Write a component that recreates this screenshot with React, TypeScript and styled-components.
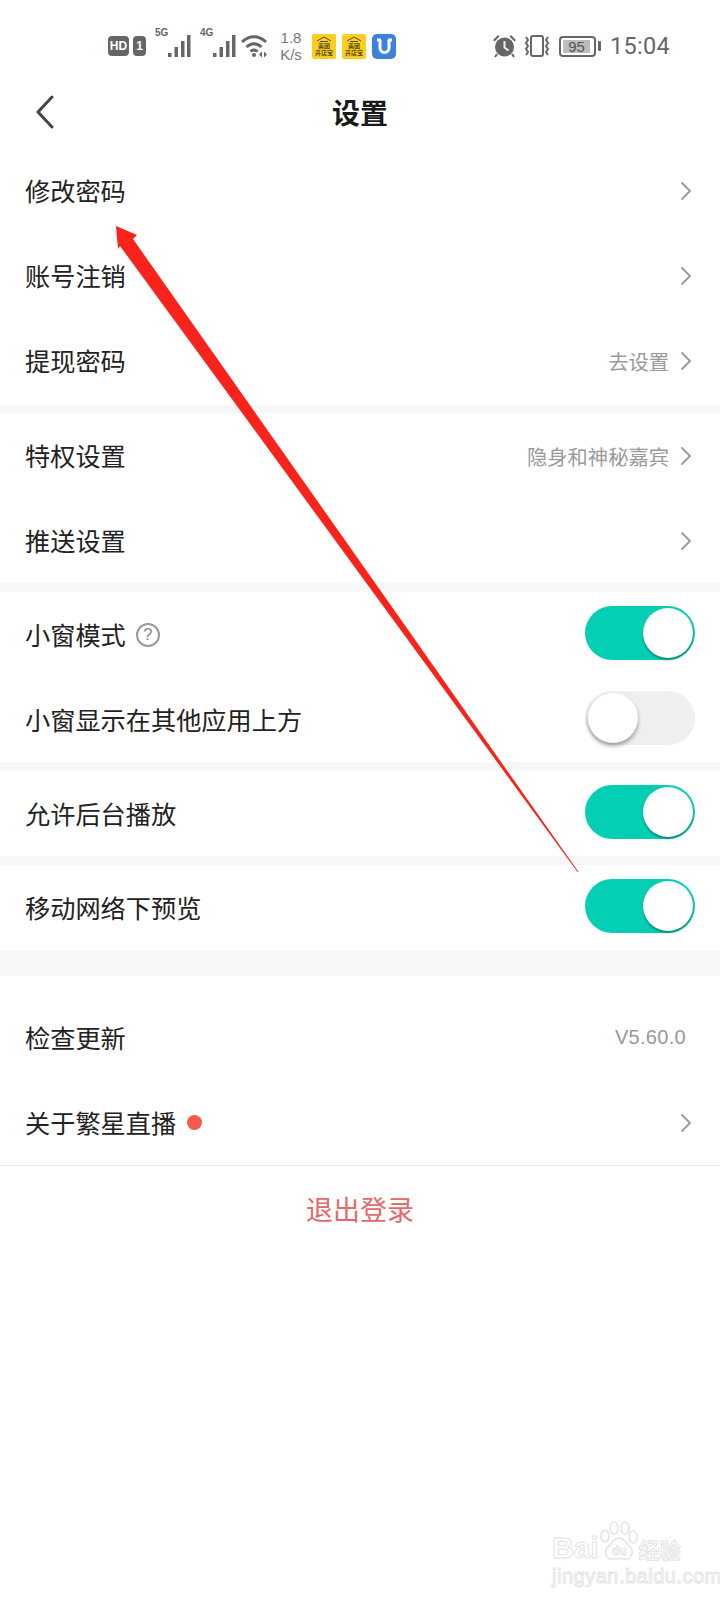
import React from 'react';
import styled, { createGlobalStyle } from 'styled-components';

const GlobalStyle = createGlobalStyle`
  html, body {
    margin: 0;
    padding: 0;
    background: #fff;
  }
  * {
    box-sizing: border-box;
  }
`;

const Screen = styled.div`
  position: relative;
  width: 720px;
  height: 1600px;
  overflow: hidden;
  background: #fff;
  font-family: "Noto Sans CJK SC", "Noto Sans", sans-serif;
  color: #1c1c1c;
`;

const StatusBar = styled.div`
  height: 76px;
  padding: 16px 50px 0 108px;
  display: flex;
  align-items: center;
  color: #666;
`;

const StatusGroup = styled.div`
  display: flex;
  align-items: center;
`;

const RightGroup = styled(StatusGroup)`
  margin-left: auto;
`;

const HdBadge = styled.span`
  width: 21px;
  height: 20px;
  border-radius: 4px;
  background: #666;
  color: #fff;
  font: 700 12px/20px "Liberation Sans", sans-serif;
  text-align: center;
`;

const SimBadge = styled(HdBadge)`
  width: 13px;
  margin-left: 4px;
`;

const NetLabel = styled.span<{ $gap: number }>`
  align-self: flex-start;
  margin: -2px 0 0 ${({ $gap }) => $gap}px;
  width: 13px;
  font: 700 10px/12px "Liberation Sans", sans-serif;
  color: #666;
`;

const WifiGap = styled.span`
  width: 4px;
`;

const Speed = styled.span`
  width: 26px;
  margin: 0 8px 0 9px;
  font: 400 15px/17px "Liberation Sans", sans-serif;
  text-align: center;
  color: #777;
`;

const AppIcon = styled.span`
  width: 24px;
  height: 25px;
  margin-right: 6px;
  padding-top: 2px;
  border-radius: 2px;
  background: #fbcf1f;
  color: #5d4a10;
  font: 700 6px/7px "Noto Sans CJK SC", sans-serif;
  text-align: center;
  display: flex;
  flex-direction: column;
  align-items: center;
`;

const BlueIcon = styled.span`
  width: 24px;
  height: 25px;
  border-radius: 5px;
  background: #3b82dc;
  display: flex;
  align-items: center;
  justify-content: center;
`;

const AlarmGap = styled.span`
  width: 6px;
`;

const Battery = styled.span`
  width: 37px;
  height: 21px;
  margin: 0 2px 0 8px;
  padding: 2px;
  border: 2px solid #666;
  border-radius: 4px;
  display: flex;
`;

const BatteryFill = styled.span`
  flex: 1;
  margin-right: 2px;
  background: #bdbdbd;
  color: #555;
  font: 400 15px/13px "Liberation Sans", sans-serif;
  text-align: center;
`;

const BatteryNub = styled.span`
  width: 3px;
  height: 10px;
  background: #666;
  border-radius: 1px;
`;

const Clock = styled.span`
  margin-left: 9px;
  font: 400 23.5px/30px "Roboto", "Liberation Sans", sans-serif;
  letter-spacing: 0.3px;
  color: #666;
`;

const NavBar = styled.div`
  position: relative;
  height: 72px;
  display: flex;
  align-items: center;
  justify-content: center;
`;

const BackButton = styled.svg`
  position: absolute;
  left: 34px;
  top: 19px;
`;

const Title = styled.h1`
  margin: 0;
  font-size: 28px;
  font-weight: 700;
  color: #1a1a1a;
`;

const Section = styled.section<{ $bottom?: number }>`
  padding-bottom: ${({ $bottom }) => $bottom ?? 0}px;
`;

const Row = styled.div`
  height: 85px;
  padding: 0 25px;
  display: flex;
  align-items: center;
  background: #fff;
`;

const Label = styled.span`
  margin-top: -1px;
  font-size: 25.2px;
  line-height: 34px;
  color: #222;
`;

const Hint = styled.span`
  margin-left: auto;
  font-size: 20.3px;
  color: #9a9a9a;
`;

const Version = styled.span`
  margin: 0 9px 0 auto;
  font: 400 20px "Liberation Sans", sans-serif;
  letter-spacing: 0.3px;
  color: #999;
`;

const Chevron = styled.svg<{ $auto?: boolean }>`
  margin: 0 4px 0 ${({ $auto }) => ($auto ? 'auto' : '12px')};
  flex: none;
`;

const Gap = styled.div<{ $height?: number }>`
  height: ${({ $height }) => $height ?? 9}px;
  background: #f7f7f7;
`;

const Spacer = styled.div`
  height: 19px;
`;

const HelpMark = styled.span`
  width: 24px;
  height: 24px;
  margin-left: 10px;
  border: 2px solid #999;
  border-radius: 50%;
  color: #888;
  font: 400 17px/20px "Liberation Sans", sans-serif;
  text-align: center;
`;

const Dot = styled.span`
  width: 15px;
  height: 15px;
  margin-left: 11px;
  border-radius: 50%;
  background: #f9584a;
`;

const Switch = styled.span<{ $on: boolean }>`
  position: relative;
  width: 110px;
  height: 54px;
  margin: -4px 0 0 auto;
  border-radius: 27px;
  background: ${({ $on }) => ($on ? '#04cfb4' : '#efefef')};
  flex: none;
`;

const Knob = styled.span<{ $on: boolean }>`
  position: absolute;
  top: 2px;
  left: ${({ $on }) => ($on ? '58px' : '3px')};
  width: 50px;
  height: 50px;
  border-radius: 50%;
  background: #fff;
  box-shadow: ${({ $on }) =>
    $on ? '0 2px 2px rgba(0, 70, 60, 0.5)' : '0 3px 4px rgba(0, 0, 0, 0.35)'};
`;

const Divider = styled.div`
  height: 1px;
  background: #ececec;
`;

const Logout = styled.div`
  height: 85px;
  display: flex;
  align-items: center;
  justify-content: center;
  font-size: 27px;
  color: #e26a6a;
`;

const Arrow = styled.svg`
  position: absolute;
  left: 0;
  top: 0;
  pointer-events: none;
`;

const Watermark = styled.div`
  position: absolute;
  left: 552px;
  top: 1520px;
  width: 132px;
  color: transparent;
  -webkit-text-stroke: 1px #e4e4e4;
`;

const WatermarkLine = styled.div`
  display: flex;
  align-items: flex-end;
  height: 44px;
  white-space: nowrap;
`;

const Bai = styled.span`
  font: 700 30px/32px "Liberation Sans", sans-serif;
`;

const Paw = styled.svg`
  margin: 0 0 1px 1px;
  flex: none;
  overflow: visible;
`;

const Jing = styled.span`
  margin-left: 1px;
  font-size: 21px;
  font-weight: 700;
  line-height: 30px;
`;

const WatermarkUrl = styled.div`
  margin-top: 2px;
  font: 400 20px/20px "Liberation Sans", sans-serif;
  letter-spacing: 0.5px;
  white-space: nowrap;
`;

function Bars() {
  return (
    <svg width="24" height="22" viewBox="0 0 24 22" fill="#666">
      <rect x="0" y="18" width="3.500" height="4" />
      <rect x="6.500" y="12" width="3.500" height="10" />
      <rect x="13" y="6" width="3.500" height="16" />
      <rect x="19" y="0" width="3.500" height="22" />
    </svg>
  );
}

function Wifi() {
  return (
    <svg width="28" height="24" viewBox="0 0 28 24" fill="none" stroke="#666" strokeWidth="3">
      <path d="M1 8c7-7 17-7 24 0" />
      <path d="M5.500 13c4.500-4.500 10.500-4.500 15 0" />
      <path d="M9.500 17.500c2-2 5-2 7 0" />
      <circle cx="13" cy="21" r="2" fill="#666" stroke="none" />
      <path d="M21 17.500v6l-3-3zM23 17.500v6l3-3z" fill="#666" stroke="none" />
    </svg>
  );
}

function Alarm() {
  return (
    <svg width="25" height="24" viewBox="0 0 25 24" fill="#666">
      <circle cx="12.500" cy="13" r="9.500" />
      <path d="M1 6l5-5 1.500 1.500-5 5zM24 6l-5-5-1.500 1.500 5 5z" />
      <path d="M12.500 7v6.500l4 3" fill="none" stroke="#eee" strokeWidth="2" />
      <path d="M5 20l-2 3M20 20l2 3" fill="none" stroke="#666" strokeWidth="2" />
    </svg>
  );
}

function Vibrate() {
  return (
    <svg width="28" height="24" viewBox="0 0 28 24" fill="none" stroke="#666" strokeWidth="2">
      <rect x="8" y="2" width="12" height="20" rx="2" />
      <path d="M3 3l2 3-2 3 2 3-2 3 2 3-2 3" />
      <path d="M25 3l-2 3 2 3-2 3 2 3-2 3 2 3" />
    </svg>
  );
}

function ShopIcon() {
  return (
    <AppIcon>
      <svg width="16" height="6" viewBox="0 0 16 6" fill="none" stroke="#5d4a10" strokeWidth="1">
        <path d="M1 5l7-4 7 4M4 5.500h8" />
      </svg>
      <span>美团<br />开店宝</span>
    </AppIcon>
  );
}

function RowChevron({ auto }: { auto?: boolean }) {
  return (
    <Chevron $auto={auto} width="10" height="18" viewBox="0 0 10 18" fill="none">
      <path d="M1 1l8 8-8 8" stroke="#999" strokeWidth="1.800" strokeLinecap="round" strokeLinejoin="round" />
    </Chevron>
  );
}

export default function App() {
  return (
    <Screen>
      <GlobalStyle />
      <StatusBar>
        <StatusGroup>
          <HdBadge>HD</HdBadge>
          <SimBadge>1</SimBadge>
          <NetLabel $gap={9}>5G</NetLabel>
          <Bars />
          <NetLabel $gap={8}>4G</NetLabel>
          <Bars />
          <WifiGap />
          <Wifi />
          <Speed>1.8 K/s</Speed>
          <ShopIcon />
          <ShopIcon />
          <BlueIcon>
            <svg width="17" height="18" viewBox="0 0 17 18" fill="none" stroke="#fff" strokeWidth="3">
              <path d="M4 3v8a4.500 4.500 0 0 0 9 0V3" />
              <path d="M1 3h4M12 3h4" />
            </svg>
          </BlueIcon>
        </StatusGroup>
        <RightGroup>
          <Alarm />
          <AlarmGap />
          <Vibrate />
          <Battery>
            <BatteryFill>95</BatteryFill>
          </Battery>
          <BatteryNub />
          <Clock>15:04</Clock>
        </RightGroup>
      </StatusBar>

      <NavBar>
        <BackButton width="20" height="34" viewBox="0 0 20 34" fill="none">
          <path d="M18 2L4 17l14 15" stroke="#444" strokeWidth="3" strokeLinecap="round" strokeLinejoin="round" />
        </BackButton>
        <Title>设置</Title>
      </NavBar>

      <Section $bottom={2}>
        <Row>
          <Label>修改密码</Label>
          <RowChevron auto />
        </Row>
        <Row>
          <Label>账号注销</Label>
          <RowChevron auto />
        </Row>
        <Row>
          <Label>提现密码</Label>
          <Hint>去设置</Hint>
          <RowChevron />
        </Row>
      </Section>
      <Gap $height={8} />
      <Row>
        <Label>特权设置</Label>
        <Hint>隐身和神秘嘉宾</Hint>
        <RowChevron />
      </Row>
      <Row>
        <Label>推送设置</Label>
        <RowChevron auto />
      </Row>
      <Gap />
      <Row>
        <Label>小窗模式</Label>
        <HelpMark>?</HelpMark>
        <Switch $on><Knob $on /></Switch>
      </Row>
      <Row>
        <Label>小窗显示在其他应用上方</Label>
        <Switch $on={false}><Knob $on={false} /></Switch>
      </Row>
      <Gap />
      <Row>
        <Label>允许后台播放</Label>
        <Switch $on><Knob $on /></Switch>
      </Row>
      <Gap />
      <Row>
        <Label>移动网络下预览</Label>
        <Switch $on><Knob $on /></Switch>
      </Row>
      <Gap $height={26} />
      <Spacer />
      <Row>
        <Label>检查更新</Label>
        <Version>V5.60.0</Version>
      </Row>
      <Row>
        <Label>关于繁星直播</Label>
        <Dot />
        <RowChevron auto />
      </Row>
      <Divider />
      <Logout>退出登录</Logout>

      <Arrow width="720" height="1600" viewBox="0 0 720 1600">
        <polygon points="116,226 137,235 133,239 578.500,872 577.500,872 120,246 118,249" fill="#f8231a" />
      </Arrow>

      <Watermark>
        <WatermarkLine>
          <Bai>Bai</Bai>
          <Paw width="38" height="42" viewBox="0 0 38 42" fill="none" stroke="#e4e4e4" strokeWidth="1.500">
            <ellipse cx="5" cy="15" rx="4" ry="6" />
            <ellipse cx="14" cy="7" rx="4" ry="6" />
            <ellipse cx="25" cy="7" rx="4" ry="6" />
            <ellipse cx="33" cy="16" rx="4" ry="6" />
            <path d="M19 17c-6 0-7 6-11 9-5 4-2 13 5 12 4 0 8-1 12 0 7 1 9-8 5-12-4-3-5-9-11-9z" />
            <text x="19" y="34" fontSize="12" fontWeight="700" textAnchor="middle" strokeWidth="0.800" fontFamily="Liberation Sans, sans-serif">du</text>
          </Paw>
          <Jing>经验</Jing>
        </WatermarkLine>
        <WatermarkUrl>jingyan.baidu.com</WatermarkUrl>
      </Watermark>
    </Screen>
  );
}
